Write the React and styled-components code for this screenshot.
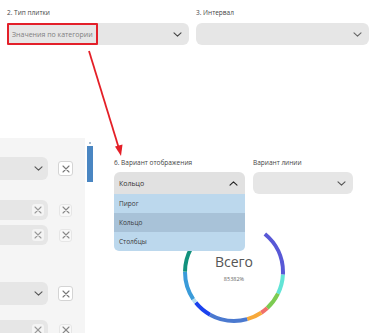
import React from 'react';
import styled, { createGlobalStyle } from 'styled-components';

const GlobalStyle = createGlobalStyle`
  html, body {
    margin: 0;
    padding: 0;
    background: #ffffff;
  }
  body {
    font-family: 'Open Sans', 'Liberation Sans', sans-serif;
  }
`;

const Page = styled.div`
  position: relative;
  width: 371px;
  height: 333px;
  overflow: hidden;
  background: #ffffff;
`;

const TopRow = styled.div`
  display: flex;
  gap: 7px;
  padding: 8px 0 0 7px;
`;

const Field = styled.div`
  position: relative;
  width: ${props => props.width}px;
  display: flex;
  flex-direction: column;
`;

const Label = styled.div`
  font-size: 6.5px;
  line-height: 9px;
  color: #444;
  height: ${props => props.h || 15}px;
`;

const Select = styled.div`
  box-sizing: border-box;
  height: ${props => props.h || 22}px;
  background: ${props => (props.open ? '#e1e1e1' : '#e6e6e6')};
  border-radius: ${props => (props.open ? '6px 6px 0 0' : '6px')};
  display: flex;
  align-items: center;
  justify-content: space-between;
  padding: 0 7px 0 5px;
  font-size: 7px;
  color: ${props => (props.open ? '#333' : '#808080')};
`;

const Highlight = styled.div`
  position: absolute;
  left: 0;
  top: 15px;
  width: 91px;
  height: 22px;
  box-sizing: border-box;
  border: 2px solid #e3202a;
  border-radius: 1px;
`;

const Lower = styled.div`
  display: flex;
  align-items: flex-start;
  margin-top: 93px;
`;

const LeftPanel = styled.div`
  width: 85px;
  height: 195px;
  background: #f5f5f5;
  box-sizing: border-box;
  padding-top: 19px;
  display: flex;
  flex-direction: column;
`;

const PanelRow = styled.div`
  display: flex;
  align-items: center;
  margin-bottom: ${props => props.mb || 0}px;
`;

const PanelSelect = styled.div`
  box-sizing: border-box;
  width: 48px;
  height: ${props => props.h}px;
  background: #e6e6e6;
  border-radius: 0 6px 6px 0;
  display: flex;
  align-items: center;
  justify-content: flex-end;
  padding-right: ${props => props.pr || 5}px;
`;

const ClearButton = styled.div`
  box-sizing: border-box;
  width: ${props => props.size}px;
  height: ${props => props.size}px;
  margin-left: ${props => props.ml || 0}px;
  border: 1px solid ${props => props.border};
  background: ${props => props.bg};
  border-radius: 3px;
  display: flex;
  align-items: center;
  justify-content: center;
`;

const ScrollTrack = styled.div`
  width: 7px;
  margin-left: 1px;
  padding-top: 4px;
  display: flex;
  flex-direction: column;
  align-items: center;
`;

const ScrollDot = styled.div`
  width: 2px;
  height: 2px;
  background: #8aa6c0;
  border-radius: 1px;
`;

const ScrollThumb = styled.div`
  width: 6px;
  height: 36px;
  margin-top: 2px;
  background: #4a86c2;
`;

const RightSection = styled.div`
  margin-left: 21px;
  padding-top: 20px;
  display: flex;
  flex-direction: column;
`;

const FieldsRow = styled.div`
  display: flex;
  gap: 8px;
`;

const Menu = styled.div`
  position: absolute;
  left: 0;
  right: 0;
  top: 36px;
  border-radius: 0 0 5px 5px;
  overflow: hidden;
  z-index: 2;
`;

const Option = styled.div`
  height: 19px;
  display: flex;
  align-items: center;
  padding-left: 5px;
  font-size: 6.5px;
  color: #3a3a3a;
  background: ${props => (props.active ? '#a8c2d8' : '#bcd8ed')};
`;

const DonutWrap = styled.div`
  position: relative;
  width: 102px;
  height: 102px;
  margin: 27px 0 0 69px;
`;

const DonutCenter = styled.div`
  position: absolute;
  inset: 0;
  display: flex;
  flex-direction: column;
  align-items: center;
  justify-content: center;
  padding-bottom: 7px;
  box-sizing: border-box;
`;

const Total = styled.div`
  font-size: 14px;
  line-height: 16px;
  color: #555;
`;

const Percent = styled.div`
  font-size: 5.5px;
  line-height: 8px;
  margin-top: 5px;
  color: #666;
`;

const ArrowLayer = styled.svg`
  position: absolute;
  left: 0;
  top: 0;
  pointer-events: none;
  z-index: 3;
`;

const Chevron = ({ up, color = '#555' }) => (
  <svg width="9" height="5" viewBox="0 0 9 5">
    <path
      d={up ? 'M1 4.2 L4.5 0.8 L8 4.2' : 'M1 0.8 L4.5 4.2 L8 0.8'}
      fill="none"
      stroke={color}
      strokeWidth="1.1"
      strokeLinecap="round"
      strokeLinejoin="round"
    />
  </svg>
);

const Cross = ({ size = 7, color = '#777' }) => (
  <svg width={size} height={size} viewBox="0 0 8 8">
    <path d="M1 1 L7 7 M7 1 L1 7" stroke={color} strokeWidth="1.1" strokeLinecap="round" />
  </svg>
);

const segments = [
  [335, 399, '#5cb2ea'],
  [39, 93, '#5858d6'],
  [93, 116, '#62e4d6'],
  [116, 137, '#7ccb52'],
  [137, 146, '#f0716a'],
  [146, 164, '#f7a93a'],
  [164, 209, '#4b79cf'],
  [209, 231, '#1b42ee'],
  [231, 236, '#b4dcf1'],
  [236, 270, '#3a9bd9'],
  [270, 298, '#11917c'],
  [298, 335, '#2aa6c8'],
];

const Donut = () => {
  const r = 49;
  const c = 2 * Math.PI * r;
  return (
    <svg width="102" height="102" viewBox="0 0 102 102">
      <g transform="rotate(-90 51 51)">
        {segments.map(([a0, a1, col]) => (
          <circle
            key={a0}
            cx="51"
            cy="51"
            r={r}
            fill="none"
            stroke={col}
            strokeWidth="4"
            strokeDasharray={`${((a1 - a0) / 360) * c} ${c}`}
            strokeDashoffset={-(a0 / 360) * c}
          />
        ))}
      </g>
    </svg>
  );
};

const InputRow = ({ mb }) => (
  <PanelRow mb={mb}>
    <PanelSelect h={20} pr={4}>
      <ClearButton size={12} bg="rgba(255,255,255,0.55)" border="transparent">
        <Cross size={8} color="#999" />
      </ClearButton>
    </PanelSelect>
    <ClearButton size={13} ml={11} bg="#f8f8f8" border="#e6e6e6">
      <Cross size={8} color="#888" />
    </ClearButton>
  </PanelRow>
);

const SelectRow = ({ mb }) => (
  <PanelRow mb={mb}>
    <PanelSelect h={23} pr={5}>
      <Chevron />
    </PanelSelect>
    <ClearButton size={15} ml={10} bg="#ffffff" border="#d4d4d4">
      <Cross size={8} color="#777" />
    </ClearButton>
  </PanelRow>
);

export default function App() {
  return (
    <Page>
      <GlobalStyle />
      <TopRow>
        <Field width={182}>
          <Label>2. Тип плитки</Label>
          <Select>
            <span>Значения по категории</span>
            <Chevron color="#444" />
          </Select>
          <Highlight />
        </Field>
        <Field width={173}>
          <Label>3. Интервал</Label>
          <Select>
            <span />
            <Chevron color="#666" />
          </Select>
        </Field>
      </TopRow>

      <Lower>
        <LeftPanel>
          <SelectRow mb={20} />
          <InputRow mb={5} />
          <InputRow mb={37} />
          <SelectRow mb={15} />
          <InputRow />
        </LeftPanel>
        <ScrollTrack>
          <ScrollDot />
          <ScrollThumb />
        </ScrollTrack>
        <RightSection>
          <FieldsRow>
            <Field width={131}>
              <Label h={14}>6. Вариант отображения</Label>
              <Select open h={22}>
                <span>Кольцо</span>
                <Chevron up color="#222" />
              </Select>
              <Menu>
                <Option>Пирог</Option>
                <Option active>Кольцо</Option>
                <Option>Столбцы</Option>
              </Menu>
            </Field>
            <Field width={100}>
              <Label h={14}>Вариант линии</Label>
              <Select h={22}>
                <span />
                <Chevron color="#555" />
              </Select>
            </Field>
          </FieldsRow>
          <DonutWrap>
            <Donut />
            <DonutCenter>
              <Total>Всего</Total>
              <Percent>85382%</Percent>
            </DonutCenter>
          </DonutWrap>
        </RightSection>
      </Lower>

      <ArrowLayer width="371" height="333">
        <line x1="89" y1="51" x2="118.5" y2="147" stroke="#e41f27" strokeWidth="1.8" />
        <polygon points="121,156 115,146.5 122.5,144.5" fill="#e41f27" />
      </ArrowLayer>
    </Page>
  );
}
